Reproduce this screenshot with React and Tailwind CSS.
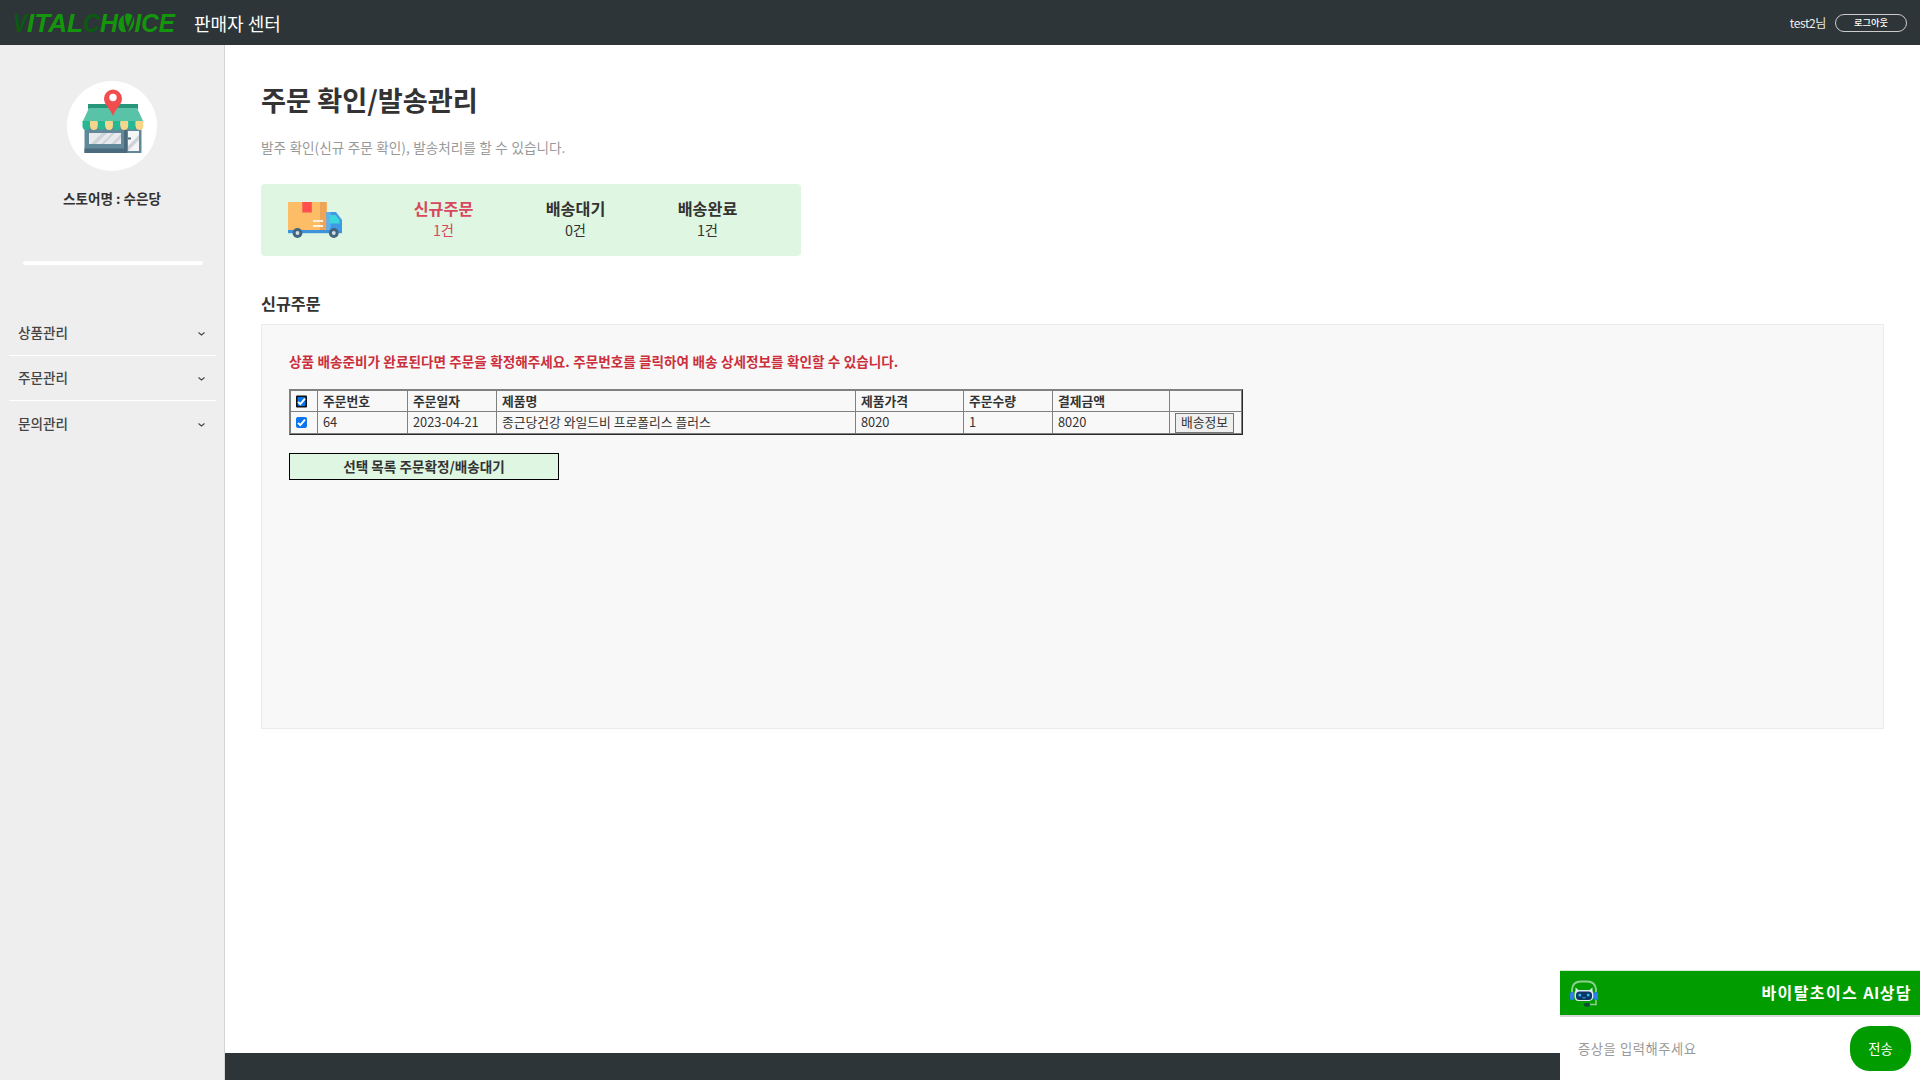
const KR = "font-['Noto_Sans_CJK_KR','Noto_Sans',sans-serif]";

function Logo() {
  return (
    <svg className="block h-[24px] w-[168px] overflow-visible" viewBox="-2 -3 168 24" fontFamily="Liberation Sans, sans-serif" fontWeight="700" fontStyle="italic" fontSize="25">
      <text x="-1" y="18" textLength="14" lengthAdjust="spacingAndGlyphs" fill="#0a5a12">V</text>
      <text x="13" y="18" textLength="56" lengthAdjust="spacingAndGlyphs" fill="#14960c">ITAL</text>
      <text x="69" y="18" textLength="17" lengthAdjust="spacingAndGlyphs" fill="#0a5a12">C</text>
      <text x="86" y="18" textLength="18" lengthAdjust="spacingAndGlyphs" fill="#14960c">H</text>
      <path d="M110 1C103 4 103 16 108 18L112 18C110 12 109 6 110 1Z" fill="#14960c" />
      <path d="M111.500 0C115 -1 117.500 0 118.500 2L114 13C111.500 8 110.500 4 111.500 0Z" fill="#14960c" />
      <path d="M120 3C121 10 118.500 16 114 18Z" fill="#14960c" />
      <text x="120.500" y="18" textLength="40.500" lengthAdjust="spacingAndGlyphs" fill="#14960c">ICE</text>
    </svg>
  );
}

function StoreIcon() {
  return (
    <svg className="block h-[64px] w-[62px]" viewBox="0 0 62 64">
      <rect x="2.500" y="37" width="57" height="27" fill="#62899a" />
      <rect x="2.500" y="59.500" width="41" height="4.500" fill="#4a6b7c" />
      <rect x="42" y="37" width="3" height="27" fill="#4a6b7c" />
      <rect x="7" y="44" width="32" height="11" fill="#e9eaee" />
      <path d="M9 55L20 44h5L14 55zM19 55L30 44h3L22 55zM29 55L39 45v4L33 55z" fill="#cfd3da" />
      <rect x="46" y="42" width="11" height="20" fill="#f4f5f7" />
      <path d="M46 57l11-11v5L46 62z" fill="#cfd3da" />
      <path d="M46 48.500h3v2h-3z" fill="#4a6b7c" />
      <rect x="6" y="15" width="50" height="5" fill="#26957a" />
      <path d="M7 19h48l6.500 14H.500z" fill="#59c3a7" />
      <g>
        <path d="M.500 32h7.600v5a3.800 4 0 0 1-7.600 0z" fill="#26b894" />
        <path d="M8.100 32h7.600v5a3.800 4 0 0 1-7.600 0z" fill="#f5d68a" />
        <path d="M15.700 32h7.600v5a3.800 4 0 0 1-7.600 0z" fill="#26b894" />
        <path d="M23.300 32h7.600v5a3.800 4 0 0 1-7.600 0z" fill="#f5d68a" />
        <path d="M30.900 32h7.600v5a3.800 4 0 0 1-7.600 0z" fill="#26b894" />
        <path d="M38.500 32h7.600v5a3.800 4 0 0 1-7.600 0z" fill="#f5d68a" />
        <path d="M46.100 32h7.600v5a3.800 4 0 0 1-7.600 0z" fill="#26b894" />
        <path d="M53.700 32h7.600v5a3.800 4 0 0 1-7.600 0z" fill="#f5d68a" />
      </g>
      <path d="M31 27C28 19 22 16 22 9.500a9 9 0 0 1 18 0C40 16 34 19 31 27z" fill="#f04e4e" />
      <circle cx="31" cy="8.500" r="3.700" fill="#fff" />
    </svg>
  );
}

function TruckIcon() {
  return (
    <svg className="block h-[36px] w-[54px]" viewBox="0 0 54 36">
      <rect x="0" y="0" width="39" height="29" fill="#fdbd67" />
      <rect x="32" y="0" width="6.500" height="29" fill="#efa558" />
      <rect x="14.300" y="0" width="9.500" height="10.500" fill="#ff4f4f" />
      <path d="M25 19h10M25 24h10" stroke="#fff1dc" strokeWidth="1.800" />
      <path d="M38.500 10H48l6 8v13H38.500z" fill="#3f9ae4" />
      <path d="M38.500 10h4v21h-4z" fill="#5db0f2" />
      <path d="M41.500 13h6l4 5v3.500h-10z" fill="#3bd6dc" />
      <rect x="0" y="28" width="54" height="3.200" fill="#3f93da" />
      <circle cx="9.500" cy="31" r="4.900" fill="#44657f" />
      <circle cx="9.500" cy="31" r="1.900" fill="#d5dde4" />
      <circle cx="45.800" cy="31" r="4.900" fill="#44657f" />
      <circle cx="45.800" cy="31" r="1.900" fill="#d5dde4" />
    </svg>
  );
}

function BotIcon() {
  return (
    <svg className="block h-[27px] w-[30px]" viewBox="0 0 30 27">
      <path d="M3 12V9Q4 1.500 12 1.500h6Q26 1.500 27 9v3" fill="none" stroke="#8fd08f" strokeWidth="1.800" />
      <path d="M6.500 11V7.500L9.500 10h11l3-2.500V11q1 1 1 5t-4 5H9.500q-4 0-4-5t1-5z" fill="#dfe9f5" />
      <rect x="7" y="11.500" width="16" height="8.500" rx="3.500" fill="#0d3763" />
      <rect x="1" y="12" width="4" height="8" rx="1.500" fill="#2d7ff0" />
      <rect x="25" y="12" width="4" height="8" rx="1.500" fill="#2d7ff0" />
      <circle cx="10.800" cy="15" r="1.500" fill="#2fb4f5" />
      <circle cx="19.200" cy="15" r="1.500" fill="#2fb4f5" />
      <path d="M13.500 17.500q1.500 1.200 3 0" stroke="#2fb4f5" fill="none" />
      <path d="M27 20v4.500h-7" fill="none" stroke="#8fd08f" strokeWidth="1.500" />
      <rect x="15" y="23" width="6" height="3.500" rx="1.500" fill="#0c4a3a" />
    </svg>
  );
}

function Check({ focused }) {
  return (
    <svg className="-ml-px block h-[13px] w-[13px] overflow-visible" viewBox="0 0 13 13">
      {focused ? (
        <>
          <rect x="1" y="0.500" width="11" height="12" rx="1" fill="#101010" />
          <rect x="2.500" y="2" width="8" height="9" rx="1" fill="#0b75e8" />
        </>
      ) : (
        <rect x="1" y="1" width="11" height="11" rx="2" fill="#0b75f0" />
      )}
      <path d="M3 6.800L5.300 9.200L10 3.700" fill="none" stroke="#fff" strokeWidth="1.900" />
    </svg>
  );
}

const menu = ["상품관리", "주문관리", "문의관리"];
const stats = [
  { label: "신규주문", count: "1건", active: true },
  { label: "배송대기", count: "0건" },
  { label: "배송완료", count: "1건" },
];
const heads = ["주문번호", "주문일자", "제품명", "제품가격", "주문수량", "결제금액", ""];
const cells = ["64", "2023-04-21", "종근당건강 와일드비 프로폴리스 플러스", "8020", "1", "8020"];
const widths = [27, 90, 89, 359, 108, 89, 117, 72];
const cell = "border-r border-b border-[#808080] px-[5px] py-0 text-left align-middle";

export default function App() {
  return (
    <div className={`${KR} flex h-[1080px] w-[1920px] flex-col overflow-hidden bg-white text-[#333]`}>
      <header className="flex h-[45px] shrink-0 items-center bg-[#2d3538] pr-[13px] pl-[12px]">
        <Logo />
        <span className="ml-[14px] text-[18px] leading-6 text-white">판매자 센터</span>
        <span className="ml-auto text-[12px] leading-5 tracking-[-0.400px] text-[#eee]">test2님</span>
        <button className="ml-[9px] flex h-[18px] w-[72px] items-center justify-center rounded-full border border-[#ccc] text-[9.300px] leading-none font-medium text-white">
          로그아웃
        </button>
      </header>

      <div className="flex min-h-0 flex-1">
        <aside className="flex w-[225px] shrink-0 flex-col border-r border-[#d4d4d4] bg-[#eee]">
          <div className="mt-[36px] flex h-[90px] w-[90px] items-center justify-center self-center rounded-full bg-white pb-[10px] pl-px">
            <StoreIcon />
          </div>
          <p className="mt-[17px] text-center text-[13.600px] leading-5 font-bold">스토어명 : 수은당</p>
          <div className="mt-[53px] ml-[23px] h-[4px] w-[180px] rounded-full bg-white" />
          <nav className="mt-[45px] mr-[8px] ml-[9px]">
            {menu.map((m, i) => (
              <div key={m} className={`flex items-center justify-between pr-[11px] pl-[9px] text-[13.600px] font-medium text-[#444] ${i === 0 ? "h-[46px] pb-px" : i === 1 ? "h-[45px] pb-px" : "h-[45px]"} ${i < 2 ? "border-b border-white" : ""}`}>
                {m}
                <svg className="mt-[3px] h-[4px] w-[7px]" viewBox="0 0 7 4"><path d="M.5 .5L3.500 3L6.500 .5" fill="none" stroke="#444" strokeWidth="1.100" /></svg>
              </div>
            ))}
          </nav>
        </aside>

        <div className="flex min-w-0 flex-1 flex-col">
          <main className="flex-1 pl-[36px]">
            <h1 className="mt-[34px] text-[27.200px] leading-10 font-bold">주문 확인/발송관리</h1>
            <p className="mt-[18px] text-[13.600px] leading-5 [word-spacing:0.500px] text-[#999]">발주 확인(신규 주문 확인), 발송처리를 할 수 있습니다.</p>
            <section className="mt-[27px] flex h-[72px] w-[540px] items-center rounded-[4px] bg-[#def6e2]">
              <div className="ml-[27px]"><TruckIcon /></div>
              <div className="ml-[35.500px] flex pb-[2px]">
                {stats.map((s) => (
                  <div key={s.label} className={`w-[132px] text-center ${s.active ? "text-[#d9475c]" : ""}`}>
                    <div className="text-[16.200px] leading-[22px] font-bold">{s.label}</div>
                    <div className="text-[14.400px] leading-[22px]">{s.count}</div>
                  </div>
                ))}
              </div>
            </section>

            <h2 className="mt-[35px] text-[16.200px] leading-6 font-bold">신규주문</h2>
            <section className="mt-[9px] h-[405px] w-[1623px] border border-[#ebebeb] bg-[#f8f8f8] pt-[26px] pl-[27px]">
              <p className="text-[13.600px] leading-5 font-bold [word-spacing:0.330px] text-[#cc2f3c]">
                상품 배송준비가 완료된다면 주문을 확정해주세요. 주문번호를 클릭하여 배송 상세정보를 확인할 수 있습니다.
              </p>
              <div className="mt-[18px] w-[954px] border border-t-[#808080] border-r-[#2a2a2a] border-b-[#2a2a2a] border-l-[#808080]">
                <table className="w-[952px] table-fixed border-separate border-spacing-0 border-t border-l border-[#808080] text-[12.800px] leading-[20px]">
                  <colgroup>{widths.map((w, i) => <col key={i} style={{ width: w }} />)}</colgroup>
                  <tbody>
                    <tr className="h-[21px]">
                      <td className={cell}><Check focused /></td>
                      {heads.map((h, i) => <th key={i} className={`${cell} font-bold`}>{h}</th>)}
                    </tr>
                    <tr className="h-[22px]">
                      <td className={`${cell} pb-px`}><Check /></td>
                      {cells.map((c, i) => (
                        <td key={i} className="border-r border-b border-[#808080] px-[5px] pt-0 pb-px text-left align-top">{c}</td>
                      ))}
                      <td className={cell}>
                        <button className="flex h-[20px] w-[59px] items-center justify-center border border-[#767676] bg-[#efefef] pb-px">배송정보</button>
                      </td>
                    </tr>
                  </tbody>
                </table>
              </div>
              <button className="mt-[18px] flex h-[27px] w-[270px] items-center justify-center border border-black bg-[#def6e2] text-[13.600px] font-bold">
                선택 목록 주문확정/배송대기
              </button>
            </section>
          </main>
          <footer className="h-[27px] shrink-0 bg-[#2d3538]" />
        </div>
      </div>

      <div className="fixed right-0 bottom-0 flex h-[110px] w-[360px] flex-col bg-white">
        <div className="flex h-[47px] items-center justify-between border-t border-b-2 border-t-[#d5edd5] border-b-[#d8d8d8] bg-[#009c00] pr-[8px] pl-[9px]">
          <BotIcon />
          <span className="pb-[2px] text-[16px] tracking-[1.400px] font-bold text-white">바이탈초이스 <span className="tracking-[0.500px]">AI</span>상담</span>
        </div>
        <div className="flex flex-1 items-center justify-between pr-[9px] pl-[18px]">
          <span className="text-[13.300px] tracking-[0.550px] text-[#999]">증상을 입력해주세요</span>
          <button className="h-[45px] w-[61px] rounded-[20px] bg-[#009c00] text-[13.300px] text-white">전송</button>
        </div>
      </div>
    </div>
  );
}
